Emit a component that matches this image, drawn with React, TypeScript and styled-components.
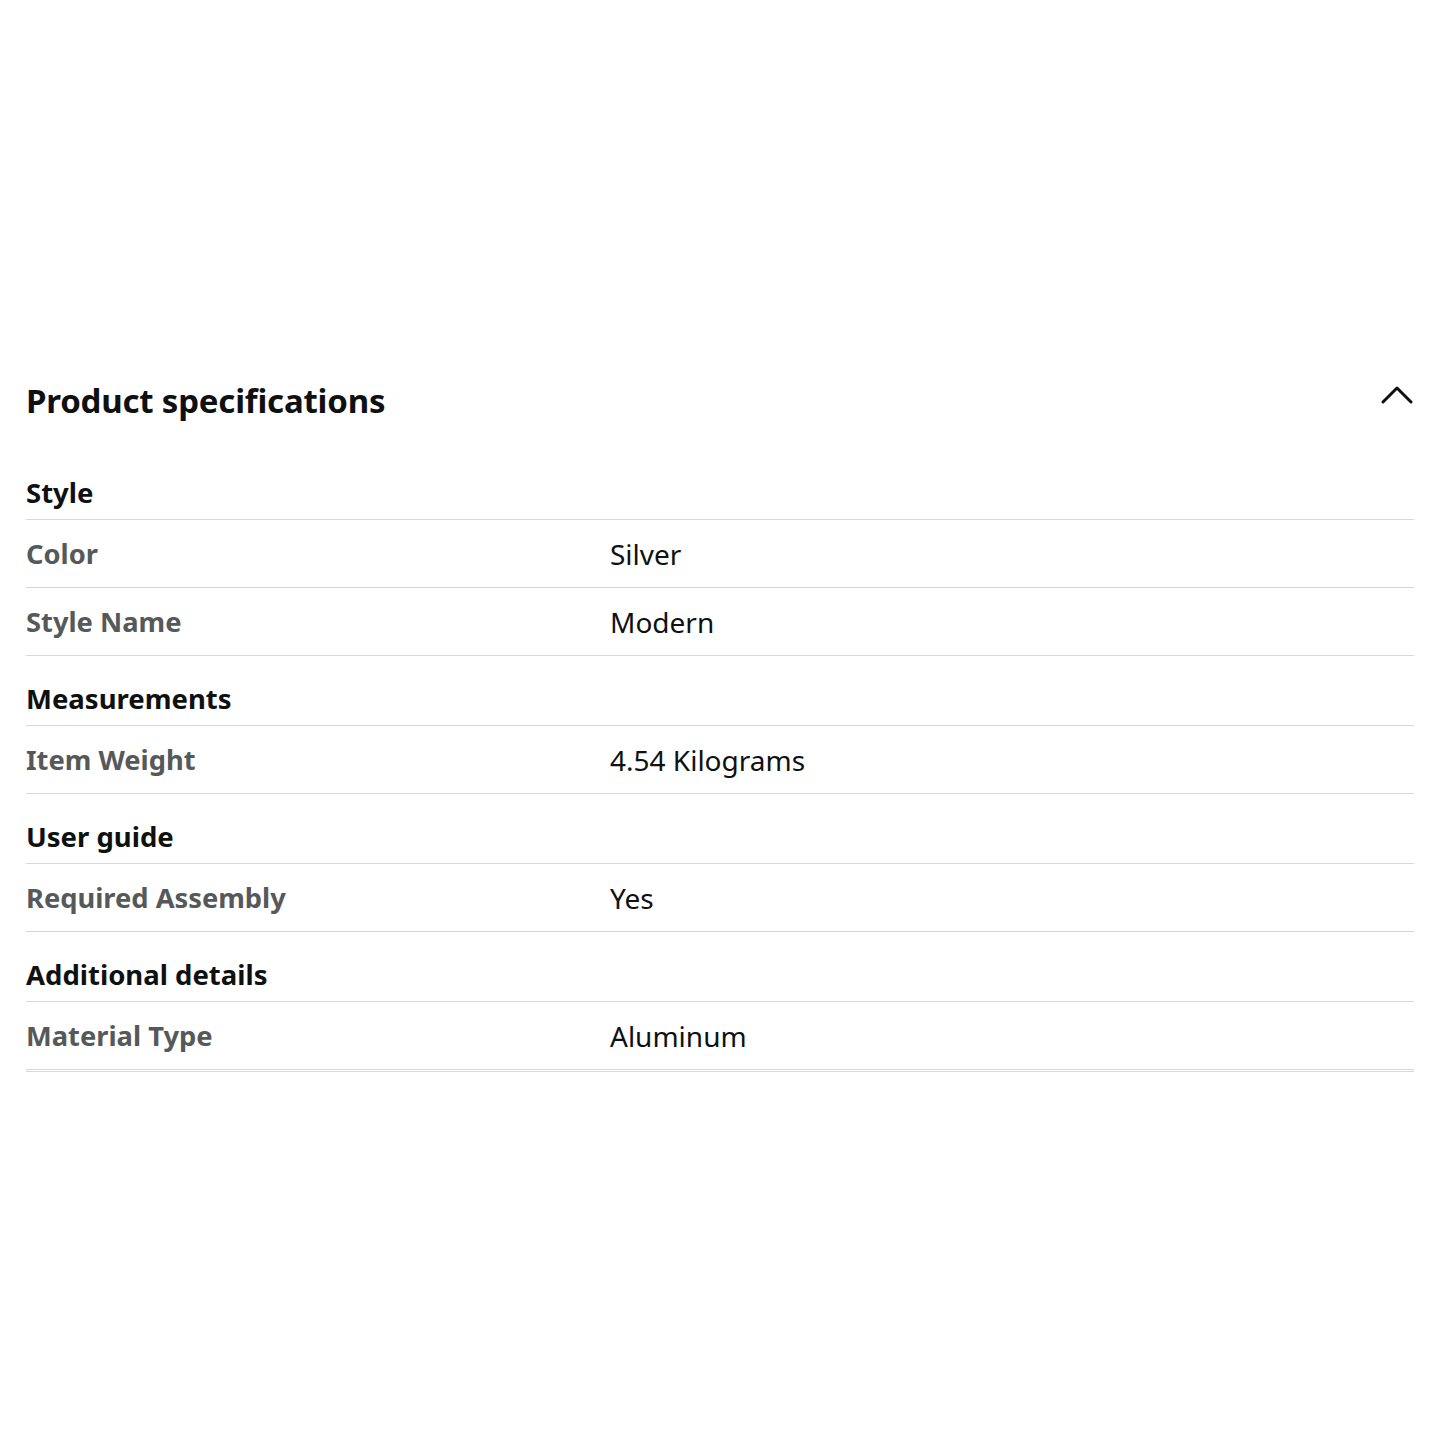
import React from "react";
import styled, { createGlobalStyle } from "styled-components";

const Global = createGlobalStyle`
  html, body { margin: 0; padding: 0; background: #fff; }
  body { font-family: "Noto Sans", "Open Sans", sans-serif; color: #0f1111; }
`;

const Page = styled.div`
  width: 1440px;
  min-height: 1440px;
  box-sizing: border-box;
  padding: 366px 26px 0 26px;
`;

const HeaderBar = styled.div`
  display: flex;
  align-items: center;
  justify-content: space-between;
  height: 68px;
`;

const Title = styled.h2`
  margin: 0;
  font-size: 33px;
  font-weight: 700;
  letter-spacing: -0.2px;
  color: #0f1111;
`;

const ChevronButton = styled.button`
  border: none;
  background: none;
  padding: 0;
  width: 40px;
  height: 40px;
  display: flex;
  align-items: center;
  justify-content: center;
  margin-top: -10px;
  margin-right: -3px;
`;

const Table = styled.div`
  margin-top: 30px;
  padding-bottom: 1px;
  border-bottom: 1px solid #d5d9d9;
`;

const SectionHead = styled.div<{ $first?: boolean }>`
  display: flex;
  align-items: center;
  border-bottom: 1px solid #d5d9d9;
  font-size: 27.5px;
  font-weight: 700;
  color: #0f1111;
  box-sizing: border-box;
  padding-top: ${(p) => (p.$first ? "2px" : "16px")};
  height: ${(p) => (p.$first ? "56px" : "70px")};
`;

const Row = styled.div`
  display: grid;
  grid-template-columns: 584px 1fr;
  align-items: center;
  height: 68px;
  border-bottom: 1px solid #d5d9d9;
  box-sizing: border-box;
`;

const Label = styled.div`
  font-size: 27.3px;
  font-weight: 700;
  color: #565959;
`;

const Value = styled.div`
  font-size: 28px;
  font-weight: 400;
  color: #0f1111;
`;

const sections = [
  { name: "Style", rows: [["Color", "Silver"], ["Style Name", "Modern"]] },
  { name: "Measurements", rows: [["Item Weight", "4.54 Kilograms"]] },
  { name: "User guide", rows: [["Required Assembly", "Yes"]] },
  { name: "Additional details", rows: [["Material Type", "Aluminum"]] },
];

export default function App() {
  return (
    <>
      <Global />
      <Page>
        <HeaderBar>
          <Title>Product specifications</Title>
          <ChevronButton aria-label="Collapse">
            <svg width="32" height="20" viewBox="0 0 32 20" fill="none">
              <path d="M2 17 L16 3 L30 17" stroke="#0f1111" strokeWidth="3" strokeLinecap="round" strokeLinejoin="round" />
            </svg>
          </ChevronButton>
        </HeaderBar>
        <Table>
          {sections.map((s, i) => (
            <React.Fragment key={s.name}>
              <SectionHead $first={i === 0}>{s.name}</SectionHead>
              {s.rows.map(([l, v]) => (
                <Row key={l}>
                  <Label>{l}</Label>
                  <Value>{v}</Value>
                </Row>
              ))}
            </React.Fragment>
          ))}
        </Table>
      </Page>
    </>
  );
}
